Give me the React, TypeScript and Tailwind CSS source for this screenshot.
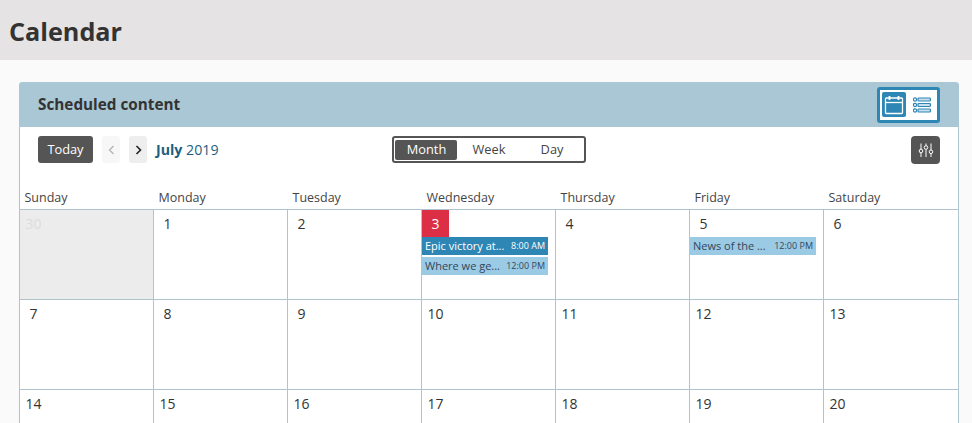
const font = "font-['Open_Sans',sans-serif]";

const dayNames = ["Sunday", "Monday", "Tuesday", "Wednesday", "Thursday", "Friday", "Saturday"];

const weeks = [
  [30, 1, 2, 3, 4, 5, 6],
  [7, 8, 9, 10, 11, 12, 13],
  [14, 15, 16, 17, 18, 19, 20],
];

interface CalendarEvent {
  title: string;
  time: string;
  dark?: boolean;
}

const events: Record<number, CalendarEvent[]> = {
  3: [
    { title: "Epic victory at...", time: "8:00 AM", dark: true },
    { title: "Where we ge...", time: "12:00 PM" },
  ],
  5: [{ title: "News of the ...", time: "12:00 PM" }],
};

function EventBar({ event }: { event: CalendarEvent }) {
  return (
    <div
      className={`flex h-[18px] w-[126px] items-center justify-between px-[3px] text-[11px] ${
        event.dark ? "bg-[#2e86b5] text-white" : "bg-[#9bcae4] text-[#33475b]"
      }`}
    >
      <span className="whitespace-nowrap">{event.title}</span>
      <span className="whitespace-nowrap text-[9px]">{event.time}</span>
    </div>
  );
}

function DayCell({ day, index, week }: { day: number; index: number; week: number }) {
  const muted = week === 0 && day === 30;
  const today = day === 3;
  return (
    <div
      className={`h-[90px] border-t border-[#b0c4d0] ${index > 0 ? "border-l" : ""} ${
        muted ? "bg-[#ececec]" : "bg-white"
      }`}
    >
      <div
        className={`flex h-[27px] w-[27px] items-center justify-center text-sm ${
          today ? "bg-[#dc2f45] text-white" : muted ? "text-[#dcdcdc]" : "text-[#333]"
        }`}
      >
        {day}
      </div>
      <div className="flex flex-col gap-[2px]">
        {(events[day] ?? []).map((event) => (
          <EventBar key={event.title} event={event} />
        ))}
      </div>
    </div>
  );
}

function CalendarIcon() {
  return (
    <svg width="20" height="20" viewBox="0 0 20 20" fill="none" stroke="#fff" strokeWidth="1.3">
      <rect x="1.5" y="3" width="17" height="15.5" rx="1" />
      <path d="M1.5 7.5h17" />
      <path d="M5.5 1v4M14.5 1v4" strokeWidth="1.8" />
    </svg>
  );
}

function ListIcon() {
  return (
    <svg width="18" height="16" viewBox="0 0 18 16" fill="none" stroke="#2e86b5" strokeWidth="1.2">
      <circle cx="2" cy="2.5" r="1.6" />
      <circle cx="2" cy="8" r="1.6" />
      <circle cx="2" cy="13.5" r="1.6" />
      <rect x="5" y="1" width="12.4" height="3" rx="0.8" fill="#c9e0ec" />
      <rect x="5" y="6.5" width="12.4" height="3" rx="0.8" fill="#c9e0ec" />
      <rect x="5" y="12" width="12.4" height="3" rx="0.8" fill="#c9e0ec" />
    </svg>
  );
}

function SlidersIcon() {
  return (
    <svg width="16" height="14" viewBox="0 0 16 14" fill="none" stroke="#fff" strokeWidth="1">
      <path d="M3 0.5v5.5M3 10v4M8 0.5v2M8 6.5v7.5M13 0.5v6.5M13 10.5v3.5" />
      <circle cx="3" cy="8" r="1.8" />
      <circle cx="8" cy="4.5" r="1.8" />
      <circle cx="13" cy="8.8" r="1.8" />
    </svg>
  );
}

export default function App() {
  return (
    <div className={`h-[423px] overflow-hidden bg-[#fafafa] ${font}`}>
      <div className="flex h-[60px] items-center bg-[#e5e3e4] pl-[9px] pt-[4px]">
        <h1 className="text-[25.2px] font-bold text-[#333]">Calendar</h1>
      </div>

      <div className="mx-[19px] mt-[22px] w-[940px] rounded-t-[4px] border-x border-[#b0c4d0] bg-white">
        <div className="-mx-px flex h-[45px] items-center justify-between rounded-t-[4px] bg-[#a9c7d4] pl-[19px] pr-[19px]">
          <h2 className="text-[15.3px] font-bold text-[#333]">Scheduled content</h2>
          <div className="flex h-[36px] w-[63px] items-center gap-[7px] rounded-[3px] border-[3px] border-[#2e86b5] bg-white pl-[2px]">
            <div className="flex h-[25px] w-[24px] items-center justify-center rounded-[2px] bg-[#2e86b5]">
              <CalendarIcon />
            </div>
            <ListIcon />
          </div>
        </div>

        <div className="flex h-[46px] items-center pb-[1px] pl-[18px] pr-[18px]">
          <button className="h-[27px] w-[55px] rounded-[3px] bg-[#555] text-[12.8px] text-white">Today</button>
          <button className="ml-[9px] flex h-[27px] w-[18px] items-center justify-center rounded-[3px] bg-[#f7f7f7] text-[#b5b5b5]">
            <svg width="7" height="10" viewBox="0 0 7 10" fill="none" stroke="currentColor" strokeWidth="1.3">
              <path d="M5.5 1 1.5 5l4 4" />
            </svg>
          </button>
          <button className="ml-[9px] flex h-[27px] w-[18px] items-center justify-center rounded-[3px] bg-[#eeeeee] text-[#222]">
            <svg width="7" height="10" viewBox="0 0 7 10" fill="none" stroke="currentColor" strokeWidth="1.6">
              <path d="M1.5 1l4 4-4 4" />
            </svg>
          </button>
          <div className="ml-[9px] w-[236px] text-[14.2px] text-[#1d5f80]">
            <span className="font-bold">July</span> 2019
          </div>
          <div className="flex h-[27px] w-[194px] items-center rounded-[3px] border-2 border-[#555] bg-white p-[1px] text-[12.8px] text-[#444]">
            <div className="flex h-[20px] w-[62px] items-center justify-center rounded-[2px] bg-[#555] pl-px text-white">Month</div>
            <div className="flex w-[64px] justify-center">Week</div>
            <div className="flex w-[62px] justify-center">Day</div>
          </div>
          <button className="ml-auto flex h-[28px] w-[29px] items-center justify-center rounded-[4px] bg-[#555]">
            <SlidersIcon />
          </button>
        </div>

        <div className="grid h-[36px] grid-cols-[133px_134px_134px_134px_134px_134px_135px] items-end pb-[1px] text-[12.5px] text-[#444]">
          {dayNames.map((name) => (
            <div key={name} className="pl-[5.5px] first:pl-[4.5px]">
              {name}
            </div>
          ))}
        </div>

        {weeks.map((week, weekIndex) => (
          <div key={week[0]} className="grid grid-cols-[133px_134px_134px_134px_134px_134px_135px]">
            {week.map((day, index) => (
              <DayCell key={day} day={day} index={index} week={weekIndex} />
            ))}
          </div>
        ))}
      </div>
    </div>
  );
}
